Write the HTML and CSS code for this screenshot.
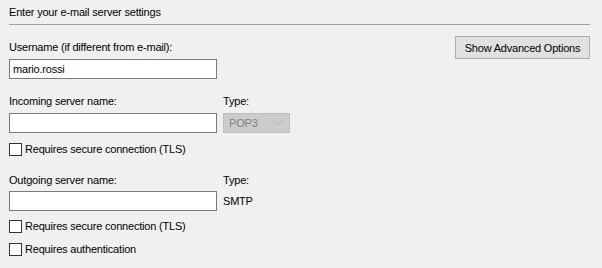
FILE: index.html
```html
<!DOCTYPE html>
<html lang="en">
<head>
  <meta charset="UTF-8">
  <title>E-mail server settings</title>
  <link rel="stylesheet" href="styles.css">
</head>
<body>
  <div class="page">
    <div class="title">Enter your e-mail server settings</div>
    <div class="rule"></div>

    <div class="top-row">
      <div class="field">
        <label class="lbl">Username (if different from e-mail):</label>
        <div class="input">mario.rossi</div>
      </div>
      <button class="btn">Show Advanced Options</button>
    </div>

    <div class="server incoming">
      <label class="lbl">Incoming server name:</label>
      <label class="lbl">Type:</label>
      <div class="input"></div>
      <div class="select">
        <span>POP3</span>
        <svg width="10" height="6" viewBox="0 0 10 6"><path d="M0.5 0.5 L5 5 L9.5 0.5" fill="none" stroke="#b0b0b0" stroke-width="1"/></svg>
      </div>
    </div>
    <div class="check after-in"><span class="box"></span>Requires secure connection (TLS)</div>

    <div class="server outgoing">
      <label class="lbl">Outgoing server name:</label>
      <label class="lbl">Type:</label>
      <div class="input"></div>
      <div class="plain">SMTP</div>
    </div>
    <div class="check"><span class="box"></span>Requires secure connection (TLS)</div>
    <div class="check"><span class="box"></span>Requires authentication</div>
  </div>
</body>
</html>
```

FILE: styles.css
```css
body { margin: 0; background: #f0f0f0; }
.page { padding: 4px 12px 0 9px; font-family: "Liberation Sans", Arial, sans-serif; font-size: 11px;
        letter-spacing: -0.2px; color: #000; }
.title { line-height: 16px; }
.rule { margin-top: 4px; border-top: 1px solid #a0a0a0; }

.top-row { display: flex; justify-content: space-between; align-items: flex-start; margin-top: 11px; }
.field { padding-top: 4px; display: flex; flex-direction: column; gap: 4px; }
.lbl { display: block; line-height: 15px; }

.input { box-sizing: border-box; width: 208px; height: 20px; background: #fff; border: 1px solid #7a7a7a;
         padding: 0 3px; line-height: 18px; }

.btn { box-sizing: border-box; width: 135px; height: 23px; margin: 0; padding: 0; background: #e1e1e1;
       border: 1px solid #adadad; font: inherit; letter-spacing: inherit; color: #000; }

.server { display: grid; grid-template-columns: 208px 67px; column-gap: 6px; row-gap: 4px; align-items: center; }
.incoming { margin-top: 15px; }
.outgoing { margin-top: 16px; row-gap: 3px; }

.select { box-sizing: border-box; height: 20px; background: #cccccc; border: 1px solid #bfbfbf;
          display: flex; align-items: center; justify-content: space-between; padding: 0 6px 0 5px; color: #838383; }
.plain { line-height: 20px; }

.check { display: flex; align-items: center; gap: 3px; line-height: 15px; margin-top: 8px; }
.check.after-in { margin-top: 9px; }
.box { box-sizing: border-box; width: 13px; height: 13px; background: #fff; border: 1px solid #333; }
```
